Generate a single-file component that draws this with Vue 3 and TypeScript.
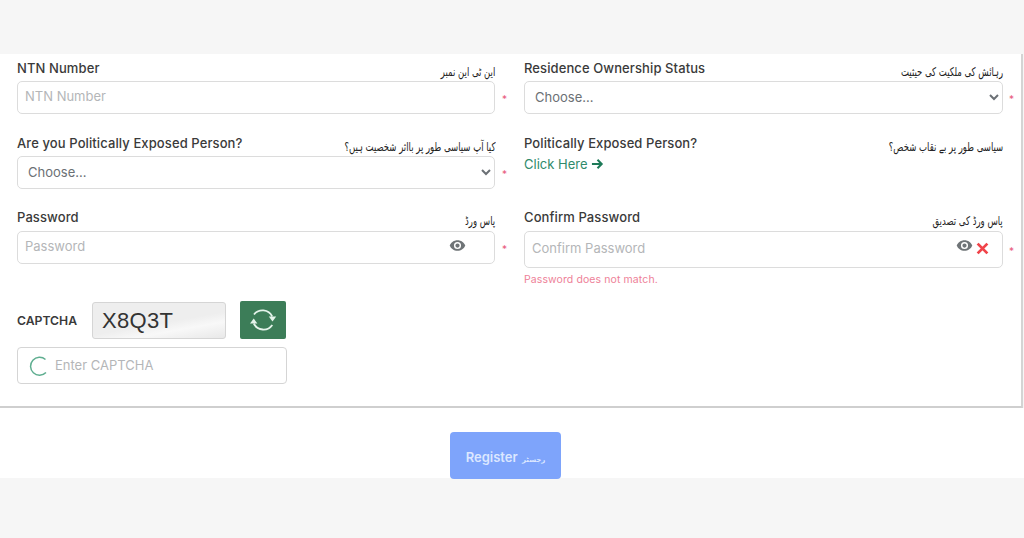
<script setup lang="ts">
const eye = "M12 4.5C7 4.5 2.7 7.6 1 12c1.7 4.4 6 7.5 11 7.5s9.3-3.1 11-7.5c-1.7-4.4-6-7.5-11-7.5zM12 17a5 5 0 1 1 0-10 5 5 0 0 1 0 10zm0-8a3 3 0 1 0 0 6 3 3 0 0 0 0-6z";
</script>

<template>
  <main class="page">
    <section class="panel">
      <div class="grid">
        <div class="field">
          <div class="label-row"><label>NTN Number</label><span class="urdu">این ٹی این نمبر</span></div>
          <div class="control-row">
            <div class="box"><input type="text" placeholder="NTN Number" /></div>
            <span class="req">*</span>
          </div>
        </div>
        <div class="field">
          <div class="label-row"><label>Residence Ownership Status</label><span class="urdu">رہائش کی ملکیت کی حیثیت</span></div>
          <div class="control-row">
            <select class="box select"><option>Choose...</option></select>
            <span class="req">*</span>
          </div>
        </div>
        <div class="field">
          <div class="label-row"><label>Are you Politically Exposed Person?</label><span class="urdu">کیا آپ سیاسی طور پر بااثر شخصیت ہیں؟</span></div>
          <div class="control-row">
            <select class="box select"><option>Choose...</option></select>
            <span class="req">*</span>
          </div>
        </div>
        <div class="field">
          <div class="label-row"><label>Politically Exposed Person?</label><span class="urdu">سیاسی طور پر بے نقاب شخص؟</span></div>
          <a class="link">Click Here
            <svg class="arrow" viewBox="0 0 14 12" width="13" height="12"><path d="M1 6h10M7 1.5 11.5 6 7 10.500" fill="none" stroke="currentColor" stroke-width="2.200" /></svg>
          </a>
        </div>
        <div class="field">
          <div class="label-row"><label>Password</label><span class="urdu">پاس ورڈ</span></div>
          <div class="control-row">
            <div class="box"><input type="password" placeholder="Password" />
              <svg class="eye" viewBox="0 0 24 24" width="17" height="17"><path :d="eye" /></svg>
            </div>
            <span class="req">*</span>
          </div>
        </div>
        <div class="field">
          <div class="label-row"><label>Confirm Password</label><span class="urdu">پاس ورڈ کی تصدیق</span></div>
          <div class="control-row">
            <div class="box tall"><input type="password" placeholder="Confirm Password" />
              <svg class="eye raised" viewBox="0 0 24 24" width="17" height="17"><path :d="eye" /></svg>
              <svg class="cross" viewBox="0 0 12 12" width="13" height="13"><path d="M1.500 1.500l9 9M10.500 1.500l-9 9" stroke="#f0444a" stroke-width="2.600" fill="none" /></svg>
            </div>
            <span class="req">*</span>
          </div>
          <p class="error">Password does not match.</p>
        </div>
      </div>

      <div class="captcha">
        <div class="captcha-top">
          <span class="captcha-label">CAPTCHA</span>
          <div class="captcha-code">X8Q3T</div>
          <button class="refresh" type="button" aria-label="Refresh">
            <svg viewBox="0 0 30 30" width="30" height="30" fill="none" stroke="#e4f3ea" stroke-width="1.800">
              <path d="M6 9.500a10.800 10.800 0 0 1 18.200 2" />
              <path d="M24.300 20a10.800 10.800 0 0 1-18.500-1.500" />
              <path d="M20.800 11.500h7.400l-3.700 5z" fill="#e4f3ea" stroke="none" />
              <path d="M2 18.500h7.400l-3.700-5z" fill="#e4f3ea" stroke="none" />
            </svg>
          </button>
        </div>
        <div class="captcha-input">
          <svg viewBox="0 0 22 22" width="22" height="22"><path d="M17.500 4.500A9 9 0 1 0 18 17.500" fill="none" stroke="#5fae90" stroke-width="1.500" /></svg>
          <input type="text" placeholder="Enter CAPTCHA" />
        </div>
      </div>
    </section>

    <div class="submit"><button type="button">Register <span class="urdu-btn">رجسٹر</span></button></div>
  </main>
</template>

<style>
html, body { margin: 0; background: #f6f6f6; }
</style>

<style scoped>
.page {
  width: 1024px;
  height: 538px;
  padding-top: 54px;
  box-sizing: border-box;
  font-family: Inter, "Open Sans", sans-serif;
  overflow: hidden;
}
.panel {
  height: 354px;
  width: 1023px;
  box-sizing: border-box;
  padding: 6px 0 0 17px;
  background: #fff;
  border-right: 2px solid #d4d4d4;
  border-bottom: 2px solid #cfcfcf;
}
.grid {
  display: grid;
  grid-template-columns: 507px 479px;
  grid-template-rows: 75px 74px auto;
}
.label-row {
  height: 21px;
  display: flex;
  justify-content: space-between;
  align-items: flex-start;
}
.field:nth-child(n+5) .label-row { height: 22px; }
.field:nth-child(odd) .label-row,
.field:nth-child(odd) .box { width: 478px; }
.field:nth-child(even) .label-row,
.field:nth-child(even) .box { width: 479px; }
label {
  font-size: 13px;
  line-height: 16px;
  font-weight: 500;
  color: #3a3a3a;
  letter-spacing: 0.1px;
}
.urdu {
  font-family: "DejaVu Sans", sans-serif;
  font-size: 10.500px;
  line-height: 16px;
  padding-top: 3px;
  color: #222;
  direction: rtl;
  transform: scale(0.81, 1.15);
  transform-origin: right center;
  white-space: nowrap;
}
.control-row { display: flex; align-items: center; }
.box {
  height: 33px;
  box-sizing: border-box;
  border: 1px solid #dcdcdc;
  border-radius: 5px;
  background: #fff;
  display: flex;
  align-items: center;
  position: relative;
  flex: none;
}
.box.tall { height: 37px; }
input {
  border: 0;
  outline: 0;
  flex: 1;
  min-width: 0;
  background: transparent;
  font: 400 13px Inter, sans-serif;
  padding: 0 0 2px;
}
.box input { padding-left: 7px; padding-bottom: 3px; }
input::placeholder { color: #b4b6b8; opacity: 1; }
.select {
  font: 400 13px Inter, sans-serif;
  color: #6b7075;
  padding: 0 4px 1px 6px;
  outline: 0;
}
.req {
  margin-left: 7px;
  margin-top: 3px;
  color: #e8597a;
  font-size: 10px;
  line-height: 10px;
}
.field:nth-child(even) .req { margin-left: 6px; }
.link {
  display: flex;
  align-items: center;
  gap: 3px;
  margin-top: -1px;
  font-size: 13px;
  line-height: 18px;
  color: #2f8a6b;
}
.arrow { color: #1d7a58; }
.eye { position: absolute; right: 28px; top: 5px; fill: #6f7477; }
.eye.raised { right: 29px; top: 5px; }
.cross { position: absolute; right: 13px; top: 10px; }
.error {
  margin: 6px 0 0;
  font-size: 10.500px;
  letter-spacing: 0.1px;
  line-height: 12px;
  color: #ee7f98;
}
.captcha { margin-top: 15px; }
.captcha-top { display: flex; align-items: center; height: 38px; }
.captcha-label {
  width: 75px;
  font-size: 12.200px;
  font-weight: 600;
  color: #3a3a3a;
}
.captcha-code {
  width: 134px;
  height: 37px;
  box-sizing: border-box;
  padding-left: 9px;
  border: 1px solid #d5d5d5;
  border-radius: 3px;
  background: linear-gradient(170deg, #eeeeee 55%, #f8f8f8 72%, #e8e8e8);
  font: 400 22px/35px "Liberation Sans", sans-serif;
  letter-spacing: 0.300px;
  color: #333;
}
.refresh {
  width: 46px;
  height: 38px;
  margin-left: 14px;
  padding: 0;
  border: 0;
  border-radius: 2px;
  background: #3c7d58;
  display: flex;
  align-items: center;
  justify-content: center;
}
.captcha-input {
  width: 270px;
  height: 37px;
  margin-top: 8px;
  box-sizing: border-box;
  border: 1px solid #d5d5d5;
  border-radius: 4px;
  display: flex;
  align-items: center;
  gap: 5px;
  padding-left: 10px;
}
.submit {
  height: 70px;
  background: #fff;
  display: flex;
  justify-content: center;
  align-items: flex-start;
  padding: 24px 13px 0 0;
  box-sizing: border-box;
  width: 1024px;
}
.submit button {
  width: 111px;
  height: 47px;
  flex: none;
  border: 0;
  border-radius: 4px;
  background: #7ea4fb;
  color: #dce7ff;
  font: 600 13px Inter, sans-serif;
  padding: 2px 0 0;
}
.urdu-btn { font-family: "DejaVu Sans", sans-serif; font-size: 7px; margin-left: 1px; }
</style>
